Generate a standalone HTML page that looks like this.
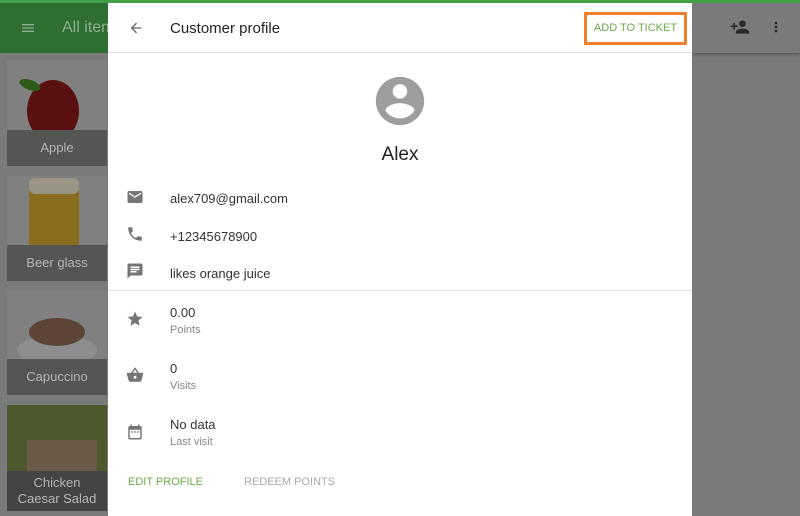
<!DOCTYPE html>
<html><head><meta charset="utf-8"><style>
*{margin:0;padding:0;box-sizing:border-box}
body{width:800px;height:516px;overflow:hidden;background:#7a7a7a;font-family:"Liberation Sans",Roboto,sans-serif;position:relative}
.top{position:absolute;left:0;top:0;width:800px;height:3px;background:#43a047}
.bar{position:absolute;left:0;top:3px;width:800px;height:50px;background:#2e6e30}
.bar .rt{position:absolute;left:692px;top:0;width:108px;height:50px;background:#7a7a7a;box-shadow:0 2px 3px rgba(0,0,0,.25)}
.tile{position:absolute;left:7px;width:100px;background:#808080;overflow:hidden}
.lab{position:absolute;left:0;right:0;bottom:0;height:36px;background:#555;color:#b5b5b5;font-size:13px;text-align:center;line-height:36px}
.dlg{position:absolute;left:108px;top:3px;width:584px;height:513px;background:#fff}
.hd{height:50px;border-bottom:1px solid #e3e3e3;position:relative}
.t{position:absolute;font-size:13px;color:#333}
.s{position:absolute;font-size:11px;color:#888}
svg.i{position:absolute;fill:#757575}
</style></head><body>
<div class="top"></div>
<div class="bar">
<svg style="position:absolute;left:20px;top:17px" width="16" height="16" viewBox="0 0 24 24" fill="#8fb08f"><path d="M3 18h18v-2H3v2zm0-5h18v-2H3v2zm0-7v2h18V6H3z"/></svg>
<div style="position:absolute;left:62px;top:16px;font-size:16px;color:#8fb08f">All items</div>
<div class="rt">
<svg style="position:absolute;left:38px;top:14px" width="20" height="20" viewBox="0 0 24 24" fill="#2a2a2a"><path d="M15 12c2.21 0 4-1.790 4-4s-1.79-4-4-4-4 1.79-4 4 1.79 4 4 4zm-9-2V7H4v3H1v2h3v3h2v-3h3v-2H6zm9 4c-2.67 0-8 1.34-8 4v2h16v-2c0-2.66-5.330-4-8-4z"/></svg>
<svg style="position:absolute;left:76px;top:16px" width="16" height="16" viewBox="0 0 24 24" fill="#2a2a2a"><path d="M12 8c1.1 0 2-.9 2-2s-.9-2-2-2-2 .9-2 2 .9 2 2 2zm0 2c-1.1 0-2 .9-2 2s.9 2 2 2 2-.9 2-2-.9-2-2-2zm0 6c-1.1 0-2 .9-2 2s.9 2 2 2 2-.9 2-2-.9-2-2-2z"/></svg>
</div></div>
<div class="tile" style="top:60px;height:106px"><div style="position:absolute;left:20px;top:20px;width:52px;height:62px;border-radius:50%;background:#5a0f10"></div><div style="position:absolute;left:12px;top:20px;width:22px;height:10px;border-radius:50%;background:#2f5a1a;transform:rotate(20deg)"></div><div class="lab">Apple</div></div>
<div class="tile" style="top:176px;height:105px"><div style="position:absolute;left:22px;top:6px;width:50px;height:80px;background:#8a6d1e;border-radius:4px"></div><div style="position:absolute;left:22px;top:2px;width:50px;height:16px;background:#9a9484;border-radius:6px"></div><div class="lab">Beer glass</div></div>
<div class="tile" style="top:290px;height:105px"><div style="position:absolute;left:10px;top:45px;width:80px;height:30px;border-radius:50%;background:#8d8d8d"></div><div style="position:absolute;left:22px;top:28px;width:56px;height:28px;border-radius:50%;background:#5c4536"></div><div class="lab">Capuccino</div></div>
<div class="tile" style="top:405px;height:106px;background:#4d5a2e"><div style="position:absolute;left:20px;top:35px;width:70px;height:40px;background:#6b5a45"></div><div class="lab" style="height:40px;line-height:16px;padding-top:4px;background:#444">Chicken<br>Caesar Salad</div></div>

<div class="dlg">
<div class="hd">
<svg style="position:absolute;left:20px;top:17px" width="16" height="16" viewBox="0 0 24 24" fill="#666"><path d="M20 11H7.83l5.59-5.59L12 4l-8 8 8 8 1.41-1.41L7.83 13H20v-2z"/></svg>
<div style="position:absolute;left:62px;top:17px;font-size:15px;color:#222">Customer profile</div>
<div style="position:absolute;left:476px;top:9px;width:103px;height:33px;border:3px solid #f0812a;color:#6aac4a;font-size:11px;text-align:center;line-height:27px">ADD TO TICKET</div>
</div>
<svg style="position:absolute;left:263px;top:69px" width="58" height="58" viewBox="0 0 24 24" fill="#9e9e9e"><path d="M12 2C6.48 2 2 6.48 2 12s4.48 10 10 10 10-4.48 10-10S17.52 2 12 2zm0 3c1.66 0 3 1.34 3 3s-1.34 3-3 3-3-1.34-3-3 1.34-3 3-3zm0 14.2c-2.5 0-4.71-1.28-6-3.220.03-1.99 4-3.08 6-3.08 1.99 0 5.97 1.09 6 3.08-1.29 1.94-3.5 3.22-6 3.22z"/></svg>
<div style="position:absolute;left:0;width:584px;top:141px;text-align:center;font-size:19px;color:#222">Alex</div>
<svg class="i" style="left:18px;top:185px" width="18" height="18" viewBox="0 0 24 24"><path d="M20 4H4c-1.1 0-2 .9-2 2v12c0 1.1.9 2 2 2h16c1.1 0 2-.9 2-2V6c0-1.1-.9-2-2-2zm0 4l-8 5-8-5V6l8 5 8-5v2z"/></svg>
<div class="t" style="left:62px;top:188px">alex709@gmail.com</div>
<svg class="i" style="left:18px;top:222px" width="18" height="18" viewBox="0 0 24 24"><path d="M6.62 10.79c1.44 2.83 3.76 5.14 6.59 6.59l2.2-2.2c.27-.27.67-.36 1.02-.24 1.12.37 2.33.57 3.57.57.55 0 1 .45 1 1V20c0 .55-.45 1-1 1-9.39 0-17-7.61-17-17 0-.55.45-1 1-1h3.5c.55 0 1 .45 1 1 0 1.25.2 2.45.57 3.57.11.35.03.74-.25 1.02l-2.2 2.2z"/></svg>
<div class="t" style="left:62px;top:226px">+12345678900</div>
<svg class="i" style="left:18px;top:259px" width="18" height="18" viewBox="0 0 24 24"><path d="M20 2H4c-1.1 0-2 .9-2 2v18l4-4h14c1.1 0 2-.9 2-2V4c0-1.1-.9-2-2-2zM6 9h12v2H6V9zm8 5H6v-2h8v2zm4-6H6V6h12v2z"/></svg>
<div class="t" style="left:62px;top:263px">likes orange juice</div>
<div style="position:absolute;left:0;top:287px;width:584px;height:1px;background:#e3e3e3"></div>
<svg class="i" style="left:18px;top:307px" width="18" height="18" viewBox="0 0 24 24"><path d="M12 17.27L18.18 21l-1.64-7.03L22 9.24l-7.19-.61L12 2 9.19 8.63 2 9.24l5.46 4.73L5.82 21z"/></svg>
<div class="t" style="left:62px;top:302px">0.00</div><div class="s" style="left:62px;top:321px">Points</div>
<svg class="i" style="left:18px;top:363px" width="18" height="18" viewBox="0 0 24 24"><path d="M17.21 9l-4.38-6.56c-.19-.28-.51-.42-.83-.42-.32 0-.64.14-.83.43L6.79 9H2c-.55 0-1 .45-1 1 0 .09.01.18.04.27l2.54 9.27c.23.84 1 1.46 1.92 1.46h13c.92 0 1.69-.62 1.93-1.46l2.54-9.27L23 10c0-.55-.45-1-1-1h-4.79zM9 9l3-4.4L15 9H9zm3 8c-1.1 0-2-.9-2-2s.9-2 2-2 2 .9 2 2-.9 2-2 2z"/></svg>
<div class="t" style="left:62px;top:358px">0</div><div class="s" style="left:62px;top:377px">Visits</div>
<svg class="i" style="left:18px;top:420px" width="18" height="18" viewBox="0 0 24 24"><path d="M9 11H7v2h2v-2zm4 0h-2v2h2v-2zm4 0h-2v2h2v-2zm2-7h-1V2h-2v2H8V2H6v2H5c-1.11 0-1.99.9-1.99 2L3 20c0 1.1.89 2 2 2h14c1.1 0 2-.9 2-2V6c0-1.1-.9-2-2-2zm0 16H5V9h14v11z"/></svg>
<div class="t" style="left:62px;top:414px">No data</div><div class="s" style="left:62px;top:433px">Last visit</div>
<div style="position:absolute;left:20px;top:473px;font-size:11px;color:#6aac4a">EDIT PROFILE</div>
<div style="position:absolute;left:136px;top:473px;font-size:11px;color:#aaa">REDEEM POINTS</div>
</div>
</body></html>
